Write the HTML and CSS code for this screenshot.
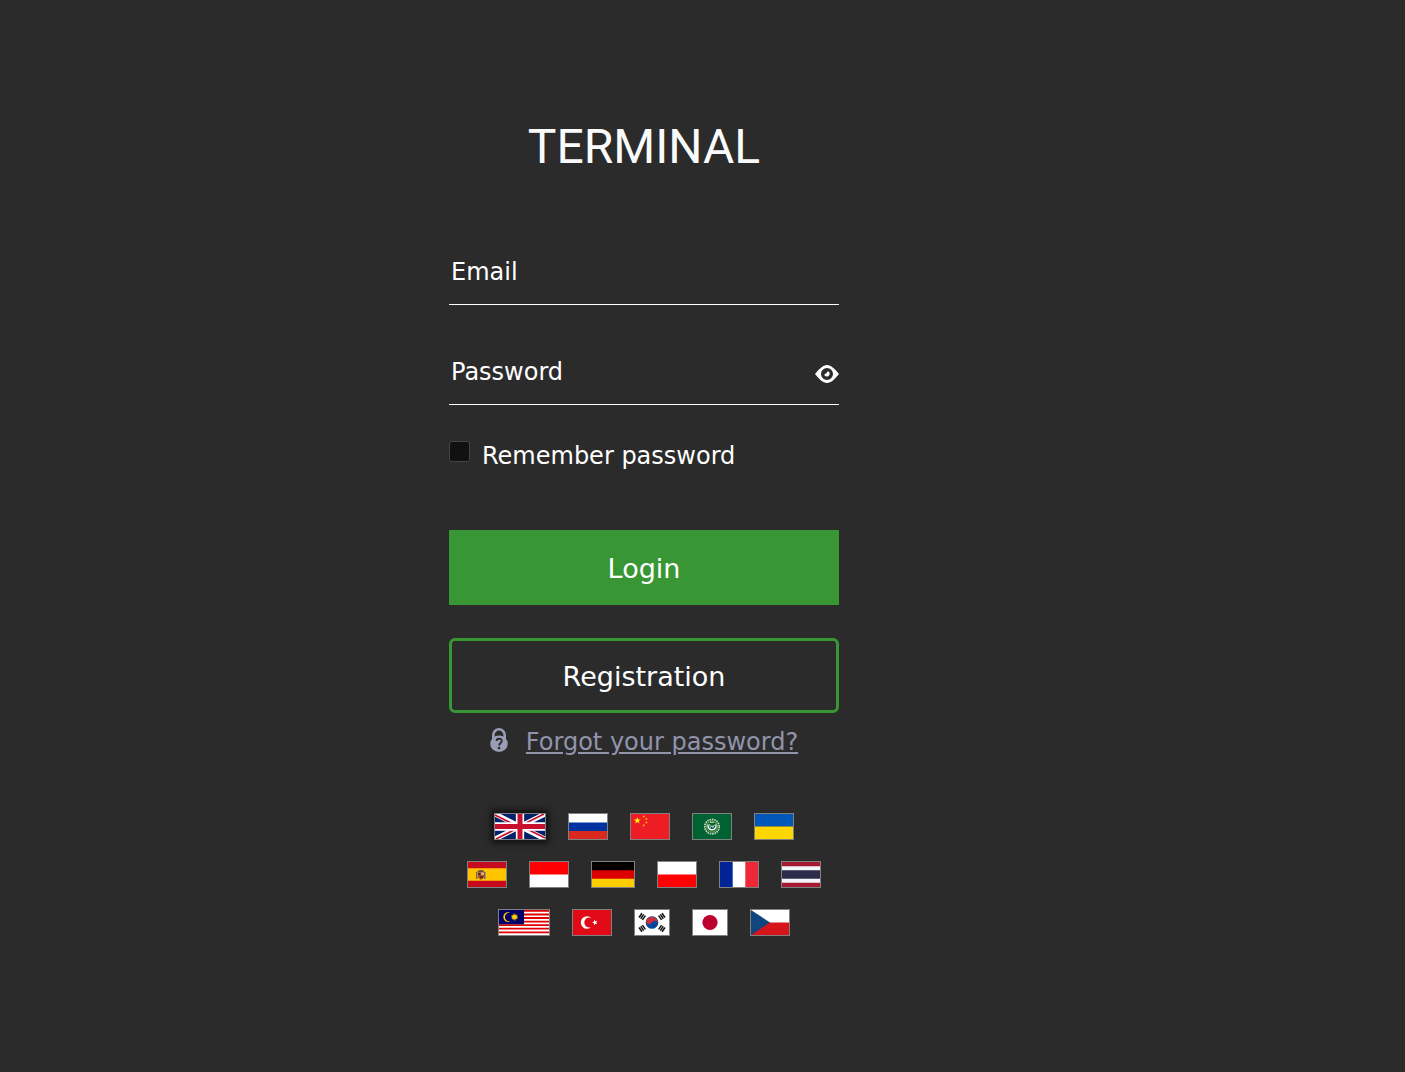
FILE: index.html
```html
<!DOCTYPE html>
<html lang="en">
<head>
<meta charset="utf-8">
<meta name="viewport" content="width=device-width, initial-scale=1">
<title>Terminal</title>
<link rel="stylesheet" href="styles.css">
</head>
<body>
<main class="login">
  <h1 class="title">TERMINAL</h1>
  <form class="form">
    <div class="field">
      <input class="field-input" type="email" placeholder="Email" aria-label="Email">
    </div>
    <div class="field">
      <input class="field-input" type="password" placeholder="Password" aria-label="Password">
      <button class="reveal" type="button" aria-label="Show password">
        <svg viewBox="0 0 24 18" width="24" height="18"><path fill="#fff" fill-rule="evenodd" d="M0 9C4 4 8 0 12 0s8 4 12 9c-4 5-8 9-12 9S4 14 0 9zM12 3a6 6 0 1 0 0 12a6 6 0 1 0 0-12z"/><path fill="#fff" d="M13 6.500c1.800 0 2 2.500 1.200 3.800s-3.400 1.700-4.400.5S10 8.800 11 8.600s.5-2.100 2-2.100z"/></svg>
      </button>
    </div>
    <div class="remember">
      <input class="check" type="checkbox" id="remember">
      <label class="remember-label" for="remember">Remember password</label>
    </div>
    <button class="button primary" type="submit">Login</button>
    <button class="button outline" type="button">Registration</button>
  </form>
  <div class="forgot">
    <svg viewBox="0 0 18 24" width="18" height="24"><path fill="none" stroke="#9a9db5" stroke-width="2.600" d="M3.300 12V7a5.700 5.700 0 0 1 11.400 0v5"/><ellipse cx="9" cy="15.800" rx="8.800" ry="8.200" fill="#9a9db5"/><path fill="none" stroke="#2b2b2b" stroke-width="1.900" d="M6.600 13c0-3 5.200-3 5.200-.2 0 2.200-2.600 2.200-2.600 4.600"/><circle cx="9" cy="20" r="1.300" fill="#2b2b2b"/></svg>
    <a class="forgot-link" href="#">Forgot your password?</a>
  </div>
  <nav class="languages" aria-label="Language">
    <div class="flags">
      <button class="flag wide active" aria-label="English"><svg viewBox="0 0 50 25" preserveAspectRatio="none"><path fill="#012169" d="M0 0h50v25H0z"/><path stroke="#fff" stroke-width="5" d="M0 0l50 25M50 0L0 25"/><path stroke="#c8102e" stroke-width="1.700" d="M0 1l25 12.500M50 24L25 11.500M49 0L25 12M1 25l24-12"/><path stroke="#fff" stroke-width="8.300" d="M25 0v25M0 12.500h50"/><path stroke="#c8102e" stroke-width="5" d="M25 0v25M0 12.500h50"/></svg></button>
      <button class="flag" aria-label="Russian"><svg viewBox="0 0 38 25" preserveAspectRatio="none"><path fill="#fff" d="M0 0h38v9H0z"/><path fill="#0032a0" d="M0 8.500h38v8.500H0z"/><path fill="#da291c" d="M0 17h38v8H0z"/></svg></button>
      <button class="flag" aria-label="Chinese"><svg viewBox="0 0 38 25" preserveAspectRatio="none"><path fill="#ee1c25" d="M0 0h38v25H0z"/><path fill="#ff0" d="M6.300 3l.8 2.500h2.700L7.600 7l.9 2.500-2.200-1.600-2.200 1.600L5 7 2.800 5.500h2.700z"/><g fill="#ffb000"><circle cx="12.700" cy="2.500" r="1"/><circle cx="15.400" cy="5" r="1"/><circle cx="15.400" cy="8.600" r="1"/><circle cx="12.700" cy="11.200" r="1"/></g></svg></button>
      <button class="flag" aria-label="Arabic"><svg viewBox="0 0 38 25" preserveAspectRatio="none"><path fill="#006233" d="M0 0h38v25H0z"/><circle cx="19" cy="12.700" r="7.200" fill="none" stroke="#c2d2bd" stroke-width="1.800" stroke-dasharray="1.600 .8"/><circle cx="19" cy="12.700" r="5.500" fill="none" stroke="#80a544" stroke-width="1"/><path fill="none" stroke="#fff" stroke-width="1.400" d="M15 10.500c-1 7 9 7 8 0"/><path fill="none" stroke="#d5e5da" stroke-width=".8" d="M16.500 10l1 3.500 1.500-2 1 2 1.500-3M17 8.500h4"/></svg></button>
      <button class="flag" aria-label="Ukrainian"><svg viewBox="0 0 38 25" preserveAspectRatio="none"><path fill="#0057b8" d="M0 0h38v12.500H0z"/><path fill="#ffd700" d="M0 12.500h38V25H0z"/></svg></button>
    </div>
    <div class="flags">
      <button class="flag" aria-label="Spanish"><svg viewBox="0 0 38 25" preserveAspectRatio="none"><path fill="#c60b1e" d="M0 0h38v25H0z"/><path fill="#ffc400" d="M0 6.300h38v12.400H0z"/><path fill="#77503c" d="M9.500 9c2-1.500 5-1.500 6.500 0v1.500H9.500z"/><path fill="#b84a20" d="M10 10.500h6v5l-3 2.500-3-2.500z"/><path fill="#6f6a60" d="M8 10h1.500v7H8zM16 10h1.500v7H16z"/><path fill="#d9aaa0" d="M13 10.500h3V13h-3z"/><path fill="#402820" d="M10.500 11h2v2h-2zM12 14.500h3V16h-3z"/></svg></button>
      <button class="flag" aria-label="Indonesian"><svg viewBox="0 0 38 25" preserveAspectRatio="none"><path fill="#fff" d="M0 0h38v25H0z"/><path fill="#f00" d="M0 0h38v12.500H0z"/></svg></button>
      <button class="flag medium" aria-label="German"><svg viewBox="0 0 42 25" preserveAspectRatio="none"><path d="M0 0h42v9H0z"/><path fill="#d00" d="M0 8.300h42V17H0z"/><path fill="#ffce00" d="M0 16.700h42V25H0z"/></svg></button>
      <button class="flag" aria-label="Polish"><svg viewBox="0 0 38 25" preserveAspectRatio="none"><path fill="#fff" d="M0 0h38v25H0z"/><path fill="#f00" d="M0 12.500h38V25H0z"/></svg></button>
      <button class="flag" aria-label="French"><svg viewBox="0 0 38 25" preserveAspectRatio="none"><path fill="#fff" d="M0 0h38v25H0z"/><path fill="#002395" d="M0 0h12.700v25H0z"/><path fill="#ed2939" d="M25.300 0H38v25H25.300z"/></svg></button>
      <button class="flag" aria-label="Thai"><svg viewBox="0 0 38 25" preserveAspectRatio="none"><path fill="#a51931" d="M0 0h38v25H0z"/><path fill="#f4f5f8" d="M0 4.200h38v16.600H0z"/><path fill="#2d2a4a" d="M0 8.300h38v8.400H0z"/></svg></button>
    </div>
    <div class="flags">
      <button class="flag wide" aria-label="Malay"><svg viewBox="0 0 50 25" preserveAspectRatio="none"><path fill="#fff" d="M0 0h50v25H0z"/><path stroke="#d00" stroke-width="1.800" d="M0 .9h50M0 4.500h50M0 8h50M0 11.600h50M0 15.200h50M0 18.700h50M0 22.300h50"/><path fill="#006" d="M0 0h25v14.300H0z"/><path fill="#fc0" d="M11.500 2.500A5 5 0 1 0 11.500 11.500A4.600 4.600 0 1 1 11.500 2.500z"/><circle cx="15.500" cy="7" r="2.500" fill="#fc0"/><circle cx="15.500" cy="7" r="3" fill="none" stroke="#fc0" stroke-width="1" stroke-dasharray=".7 .8"/></svg></button>
      <button class="flag" aria-label="Turkish"><svg viewBox="0 0 38 25" preserveAspectRatio="none"><path fill="#e30a17" d="M0 0h38v25H0z"/><path fill="#fff" d="M18.500 8A6.300 6.300 0 1 0 18.500 17A5 5 0 1 1 18.500 8z"/><path fill="#fff" d="M19 12.500l2-.8V9.800l1.300 1.500 2-.6-1.100 1.800 1.100 1.800-2-.6L21 15.200v-1.900z"/></svg></button>
      <button class="flag small" aria-label="Korean"><svg viewBox="0 0 34 25" preserveAspectRatio="none"><path fill="#fff" d="M0 0h34v25H0z"/><circle cx="17" cy="12.500" r="6.300" fill="#0047a0"/><path fill="#cd2e3a" d="M11.600 9.400A6.300 6.300 0 0 1 22.400 15.600A3.100 3.100 0 0 0 17 12.500A3.100 3.100 0 0 1 11.600 9.400z"/><path fill="none" stroke="#111" stroke-width="1.500" d="M4 7.500l3-4.300M5.700 8.700l3-4.300M7.400 9.900l3-4.300M4 17.500l3 4.300M5.700 16.300l3 4.300M7.400 15.100l3 4.300M30 7.500l-3-4.300M28.300 8.700l-3-4.300M26.600 9.900l-3-4.300M30 17.500l-3 4.300M28.300 16.300l-3 4.300M26.600 15.100l-3 4.300"/></svg></button>
      <button class="flag small" aria-label="Japanese"><svg viewBox="0 0 34 25" preserveAspectRatio="none"><path fill="#fff" d="M0 0h34v25H0z"/><circle cx="17" cy="12.500" r="7.600" fill="#bc002d"/></svg></button>
      <button class="flag" aria-label="Czech"><svg viewBox="0 0 38 25" preserveAspectRatio="none"><path fill="#fff" d="M0 0h38v25H0z"/><path fill="#d7141a" d="M0 12.500h38V25H0z"/><path fill="#11457e" d="M0 0l19 12.500L0 25z"/></svg></button>
    </div>
  </nav>
</main>
</body>
</html>
```
FILE: styles.css
```css
* {
  box-sizing: border-box;
}

body {
  margin: 0;
  padding: 117px 117px 0 0;
  min-height: 100vh;
  background: #2b2b2b;
  color: #fff;
  font-family: Verdana, "DejaVu Sans", sans-serif;
  font-size: 24px;
}

button,
input {
  margin: 0;
  font: inherit;
  color: inherit;
}

button {
  cursor: pointer;
}

.login {
  width: 100%;
  max-width: 390px;
  margin: 0 auto;
}

.title {
  margin: 0 0 61px;
  font: 400 48px/60px Roboto, sans-serif;
  text-align: center;
  color: #fafafa;
}

.form {
  display: flex;
  flex-direction: column;
}

.field {
  display: flex;
  align-items: center;
  height: 67px;
  margin-bottom: 33px;
  border-bottom: 1px solid #fff;
}

.field-input {
  flex: 1;
  min-width: 0;
  height: 66px;
  padding: 2px 2px 0;
  border: 0;
  outline: 0;
  background: none;
}

.field-input::placeholder {
  color: #fff;
  opacity: 1;
}

.reveal {
  display: flex;
  padding: 6px 0 0;
  border: 0;
  background: none;
}

.remember {
  display: flex;
  gap: 12px;
  margin: 3px 0 58px;
}

.check {
  appearance: none;
  width: 21px;
  height: 21px;
  border: 1px solid #444;
  border-radius: 3px;
  background: #111;
}

.check:checked {
  background: #389734;
}

.remember-label {
  line-height: 31px;
}

.button {
  height: 75px;
  padding: 2px 0 0;
  border: 3px solid #389734;
  font-size: 27px;
}

.primary {
  margin-bottom: 33px;
  background: #389734;
}

.outline {
  border-radius: 6px;
  background: none;
}

.forgot {
  display: flex;
  align-items: flex-start;
  justify-content: center;
  gap: 18px;
  margin: 15px 0 56px;
  line-height: 29px;
}

.forgot-link {
  color: #9194ab;
}

.languages {
  display: flex;
  flex-direction: column;
  gap: 21px;
}

.flags {
  display: flex;
  justify-content: center;
  gap: 22px;
}

.flag {
  width: 40px;
  height: 27px;
  padding: 0;
  border: 1px solid #808080;
  background: none;
}

.flag svg {
  display: block;
  width: 100%;
  height: 100%;
}

.wide {
  width: 52px;
}

.medium {
  width: 44px;
}

.small {
  width: 36px;
}

.active {
  box-shadow: 0 0 6px 3px #111;
}
```
